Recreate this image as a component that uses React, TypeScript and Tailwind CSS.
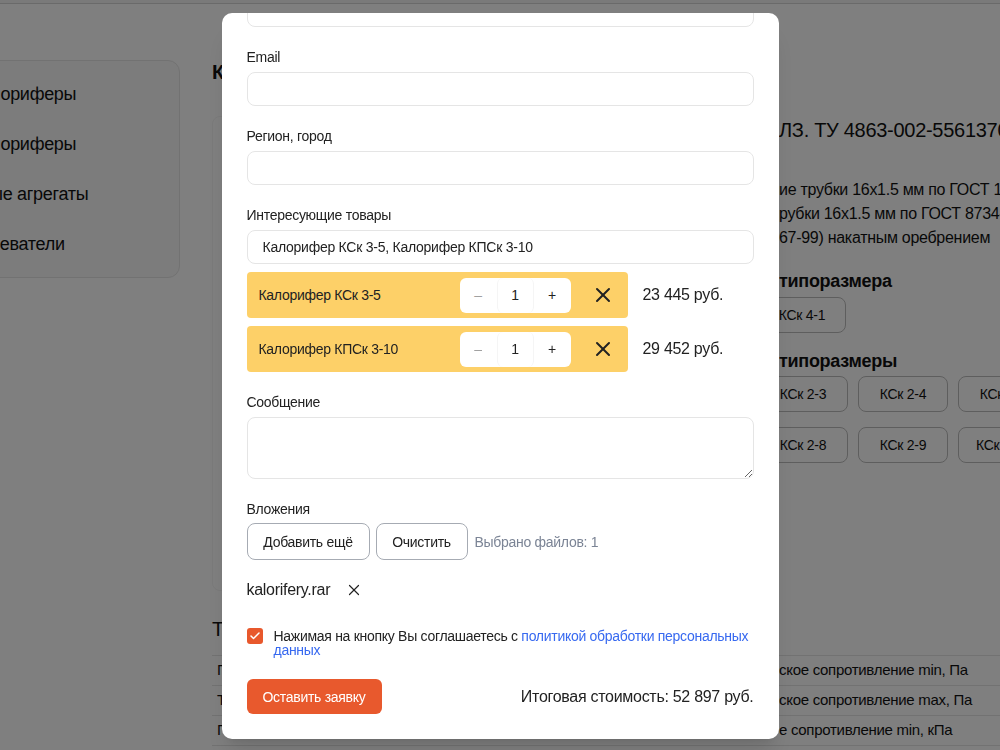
import { useLayoutEffect, useRef } from "react";
import { Check, X } from "lucide-react";

const categories = ["лориферы", "лориферы", "ые агрегаты", "реватели"];

const sizesOne = ["КСк 4-1"];
const sizesRowA = ["КСк 2-3", "КСк 2-4", "КСк 2-5"];
const sizesRowB = ["КСк 2-8", "КСк 2-9", "КСк 2-10"];

const specs = [
  { left: "Г", right: "ское сопротивление min, Па" },
  { left: "Т", right: "ское сопротивление max, Па" },
  { left: "Г", right: "е сопротивление min, кПа" },
];

const cart = [
  { name: "Калорифер КСк 3-5", qty: 1, price: "23 445 руб." },
  { name: "Калорифер КПСк 3-10", qty: 1, price: "29 452 руб." },
];

function SizeButton({ label, wide = true }: { label: string; wide?: boolean }) {
  return (
    <button
      className={`flex h-[36px] items-center justify-center rounded-lg border border-[#bdbdbd] text-sm ${
        wide ? "w-[90px]" : "w-[88px]"
      }`}
    >
      {label}
    </button>
  );
}

function Field({ label, value }: { label: string; value?: string }) {
  return (
    <div className="mt-[20px] first:mt-0">
      <label className="block text-sm leading-5">{label}</label>
      <input
        readOnly
        value={value ?? ""}
        className="mt-[5px] block h-[34px] w-full rounded-lg border border-neutral-200 px-[15px] text-sm tracking-[-0.018em] text-[#222] outline-none"
      />
    </div>
  );
}

function CartRow({ name, qty, price }: { name: string; qty: number; price: string }) {
  return (
    <div className="flex items-center">
      <div className="flex h-[46px] w-[381px] items-center rounded-[4px] bg-[#fdd068] pl-[12px] pr-[13px]">
        <span className="w-[201px] text-sm text-[#222]">{name}</span>
        <div className="flex h-[35px] w-[111px] rounded-md bg-white text-sm">
          <button className="flex w-[37px] items-center justify-center text-neutral-400">–</button>
          <span className="flex w-[37px] items-center justify-center rounded-md border-x border-neutral-100 text-[#222]">
            {qty}
          </span>
          <button className="flex w-[37px] items-center justify-center text-[#222]">+</button>
        </div>
        <button className="ml-[20px] text-[#222]">
          <X size={24} strokeWidth={2} />
        </button>
      </div>
      <span className="ml-[15px] text-base text-[#222]">{price}</span>
    </div>
  );
}

function OrderModal() {
  const scrollRef = useRef<HTMLDivElement>(null);

  // the form is opened scrolled down to the totals
  useLayoutEffect(() => {
    const el = scrollRef.current;
    if (el) el.scrollTop = el.scrollHeight;
  }, []);

  return (
    <div className="fixed inset-0 flex items-start justify-center bg-black/50 pt-[13px]">
      <div
        ref={scrollRef}
        className="h-[726px] w-[557px] overflow-hidden rounded-[10px] bg-white px-[25px] py-[25px] text-[#222] shadow-xl"
      >
        <h2 className="mb-[24px] text-xl font-bold">Оставить заявку</h2>
        <Field label="Имя" />
        <Field label="Телефон" />
        <Field label="Email" />
        <Field label="Регион, город" />
        <Field label="Интересующие товары" value="Калорифер КСк 3-5, Калорифер КПСк 3-10" />

        <div className="mt-[8px] flex flex-col gap-[8px]">
          {cart.map((item) => (
            <CartRow key={item.name} {...item} />
          ))}
        </div>

        <div className="mt-[20px]">
          <label className="block text-sm leading-5">Сообщение</label>
          <textarea
            readOnly
            className="mt-[5px] block h-[62px] w-full rounded-lg border border-neutral-200 px-[15px] py-2 text-sm outline-none"
          />
        </div>

        <div className="mt-[20px]">
          <label className="block text-sm leading-5">Вложения</label>
          <div className="mt-[4px] flex items-center">
            <button className="h-[37px] w-[123px] rounded-lg border border-[#a6abb3] text-sm text-[#222]">
              Добавить ещё
            </button>
            <button className="ml-[6px] h-[37px] w-[92px] rounded-lg border border-[#a6abb3] text-sm text-[#222]">
              Очистить
            </button>
            <span className="ml-[7px] text-sm text-[#7b8495]">Выбрано файлов: 1</span>
          </div>
          <div className="mt-[18px] flex items-center leading-6">
            <span className="text-base">kalorifery.rar</span>
            <button className="ml-[15px] text-[#222]">
              <X size={18} strokeWidth={1.6} />
            </button>
          </div>
        </div>

        <div className="mt-[26px] flex items-start gap-[11px]">
          <span className="flex h-[16px] w-[16px] shrink-0 items-center justify-center rounded-[3px] bg-[#e8582c] text-white">
            <Check size={12} strokeWidth={3} />
          </span>
          <p className="pt-[1px] text-sm leading-[14px]">
            Нажимая на кнопку Вы соглашаетесь с{" "}
            <a href="#" className="text-[#3769f0]">
              политикой обработки персональных данных
            </a>
          </p>
        </div>

        <div className="mt-[22px] flex items-center justify-between">
          <button className="h-[35px] w-[135px] rounded-md bg-[#e8592d] text-sm text-white">
            Оставить заявку
          </button>
          <span className="text-base">Итоговая стоимость: 52 897 руб.</span>
        </div>
      </div>
    </div>
  );
}

export default function App() {
  return (
    <div className="relative h-[750px] w-[1000px] overflow-hidden bg-white font-['Liberation_Sans',Arial,sans-serif] tracking-[-0.018em] text-[#111]">
      <header className="h-[4px] border-b border-neutral-300 bg-neutral-100" />

      <div className="flex gap-[32px]">
        {/* Catalogue menu */}
        <aside className="ml-[-130px] mt-[56px] h-[218px] w-[310px] shrink-0 rounded-xl border border-neutral-200 bg-[#f8f8f8] pl-[119px] pt-[8px]">
          {categories.map((c, i) => (
            <div key={i} className="flex h-[50px] items-center whitespace-nowrap text-lg">
              {c}
            </div>
          ))}
        </aside>

        {/* Product page */}
        <main className="min-w-0 flex-1 pt-[54px]">
          <h1 className="text-xl font-bold leading-7">Калорифер КСк 3-5</h1>

          <div className="mt-[30px] flex gap-[16px]">
            <div className="h-[475px] w-[530px] shrink-0 rounded-lg border border-neutral-100" />
            <div className="whitespace-nowrap">
              <p className="pl-[21px] text-xl leading-7">ЛЗ. ТУ 4863-002-55613706-2004</p>
              <div className="mt-[34px] pl-[21px] text-base leading-6">
                <p>ие трубки 16х1.5 мм по ГОСТ 10704-91</p>
                <p>рубки 16х1.5 мм по ГОСТ 8734-75</p>
                <p>67-99) накатным оребрением</p>
              </div>
              <h3 className="mt-[19px] pl-[21px] text-lg font-bold leading-6">типоразмера</h3>
              <div className="mt-[4px] flex gap-[10px]">
                {sizesOne.map((s) => (
                  <SizeButton key={s} label={s} wide={false} />
                ))}
              </div>
              <h3 className="mt-[16px] pl-[21px] text-lg font-bold leading-6">типоразмеры</h3>
              <div className="mt-[3px] flex gap-[10px]">
                {sizesRowA.map((s) => (
                  <SizeButton key={s} label={s} />
                ))}
              </div>
              <div className="mt-[15px] flex gap-[10px]">
                {sizesRowB.map((s) => (
                  <SizeButton key={s} label={s} />
                ))}
              </div>
            </div>
          </div>

          <h2 className="mt-[24px] text-xl leading-7">Технические характеристики</h2>
          <div className="mt-[12px] border-t border-neutral-200 text-[15px]">
            {specs.map((r, i) => (
              <div key={i} className="flex h-[30px] items-center border-b border-neutral-200">
                <span className="w-[567px] shrink-0 pl-[5px]">{r.left}</span>
                <span className="whitespace-nowrap">{r.right}</span>
              </div>
            ))}
          </div>
        </main>
      </div>

      <OrderModal />
    </div>
  );
}
